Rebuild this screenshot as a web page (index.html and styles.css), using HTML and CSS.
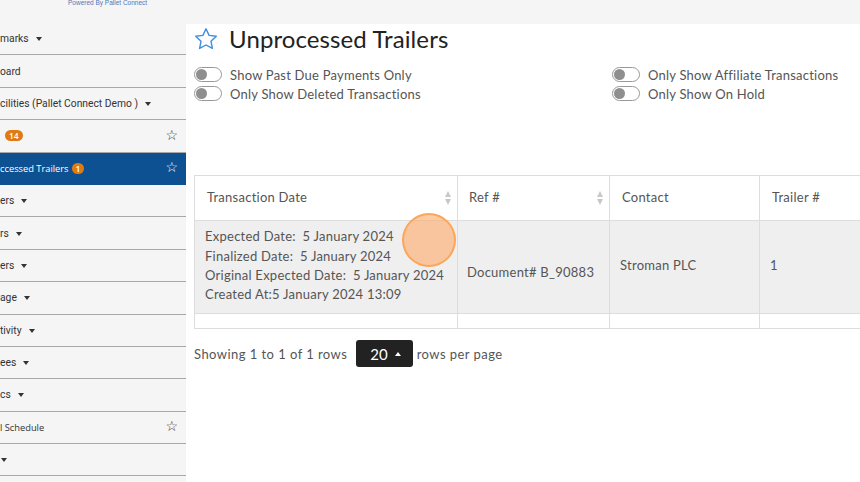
FILE: index.html
```html
<!DOCTYPE html>
<html>
<head>
<meta charset="utf-8">
<link rel="stylesheet" href="styles.css">
</head>
<body>
<div class="topbar"><span class="powered">Powered By Pallet Connect</span></div>
<div class="layout">
  <nav class="sidebar">
    <div class="item"><span class="lbl">marks</span><span class="caret"></span></div>
    <div class="item"><span class="lbl">oard</span></div>
    <div class="item"><span class="lbl">cilities (Pallet Connect Demo )</span><span class="caret"></span></div>
    <div class="item"><span class="lbl pad"></span><span class="badge">14</span><span class="star">&#9734;</span></div>
    <div class="item active"><span class="lbl os">ccessed Trailers</span><span class="badge">1</span><span class="star">&#9734;</span></div>
    <div class="item"><span class="lbl">ers</span><span class="caret"></span></div>
    <div class="item"><span class="lbl">rs</span><span class="caret"></span></div>
    <div class="item"><span class="lbl">ers</span><span class="caret"></span></div>
    <div class="item"><span class="lbl">age</span><span class="caret"></span></div>
    <div class="item"><span class="lbl">tivity</span><span class="caret"></span></div>
    <div class="item"><span class="lbl">ees</span><span class="caret"></span></div>
    <div class="item"><span class="lbl">cs</span><span class="caret"></span></div>
    <div class="item"><span class="lbl os">l Schedule</span><span class="star">&#9734;</span></div>
    <div class="item"><span class="caret first"></span></div>
  </nav>
  <main class="main">
    <h1 class="title">
      <svg class="title-star" viewBox="0 0 24 24" width="24" height="24"><path d="M12 1.8l3.1 6.6 7.2.9-5.3 5 1.4 7.1L12 18l-6.4 3.4 1.4-7.1-5.3-5 7.2-.9z" fill="none" stroke="#3d8ee0" stroke-width="1.4" stroke-linejoin="round"/></svg>
      <span>Unprocessed Trailers</span>
    </h1>
    <div class="filters">
      <div class="fcol">
        <label class="toggle"><span class="sw"><span class="knob"></span></span>Show Past Due Payments Only</label>
        <label class="toggle"><span class="sw"><span class="knob"></span></span>Only Show Deleted Transactions</label>
      </div>
      <div class="fcol">
        <label class="toggle"><span class="sw"><span class="knob"></span></span>Only Show Affiliate Transactions</label>
        <label class="toggle"><span class="sw"><span class="knob"></span></span>Only Show On Hold</label>
      </div>
    </div>
    <div class="table-wrap">
      <table class="grid">
        <thead>
          <tr>
            <th class="c1">Transaction Date<span class="sort"></span></th>
            <th class="c2">Ref #<span class="sort"></span></th>
            <th class="c3">Contact</th>
            <th class="c4">Trailer #</th>
          </tr>
        </thead>
        <tbody>
          <tr class="row">
            <td class="dates">
              <div>Expected Date:&ensp;5 January 2024</div>
              <div>Finalized Date:&ensp;5 January 2024</div>
              <div>Original Expected Date:&ensp;5 January 2024</div>
              <div>Created At:5 January 2024 13:09</div>
            </td>
            <td class="ref">Document# B_90883</td>
            <td class="contact">Stroman PLC</td>
            <td class="contact">1</td>
          </tr>
          <tr class="empty"><td></td><td></td><td></td><td></td></tr>
        </tbody>
      </table>
      <span class="click-dot"></span>
    </div>
    <div class="pager">
      <span>Showing 1 to 1 of 1 rows</span>
      <span class="size">20 <span class="up"></span></span>
      <span>rows per page</span>
    </div>
  </main>
</div>
</body>
</html>
```
FILE: styles.css
```css
* { box-sizing: border-box; }
html, body { margin: 0; padding: 0; }
body {
  width: 860px;
  height: 482px;
  overflow: hidden;
  background: #fff;
  font-family: "Lato", "Open Sans", sans-serif;
}
.topbar {
  height: 24px;
  background: #f5f5f5;
  position: relative;
}
.powered {
  position: absolute;
  left: 68px;
  top: 0;
  line-height: 6px;
  font-family: "Liberation Sans", sans-serif;
  font-size: 6.5px;
  color: #4f77b8;
}
.layout {
  display: flex;
  height: 458px;
}
.sidebar {
  width: 186px;
  flex: none;
  background: #f5f5f5;
  display: flex;
  flex-direction: column;
  margin-top: -1px;
  overflow: hidden;
}
.item {
  height: 32.4px;
  flex: none;
  border-bottom: 1px solid #a8a8a8;
  display: flex;
  align-items: center;
  font-family: "Roboto", sans-serif;
  font-size: 10.3px;
  color: #333;
  position: relative;
}
.item .lbl { white-space: nowrap; }
.item .lbl.os { font-family: "Open Sans", sans-serif; font-size: 9.3px; }
.item .lbl.pad { width: 2px; }
.caret {
  display: inline-block;
  width: 0; height: 0;
  border-left: 3px solid transparent;
  border-right: 3px solid transparent;
  border-top: 4px solid #333;
  margin-left: 7px;
  margin-top: 1px;
}
.caret.first { margin-left: 1px; }
.badge {
  display: inline-block;
  background: #e07b14;
  color: #fff;
  font-family: "Open Sans", sans-serif;
  font-size: 8.5px;
  font-weight: 600;
  line-height: 11px;
  padding: 0 4px;
  border-radius: 6px;
  margin-left: 3px;
}
.star {
  position: absolute;
  right: 8px;
  top: 50%;
  transform: translateY(-55%);
  font-size: 14px;
  color: #333;
  font-family: "DejaVu Sans", sans-serif;
}
.item.active {
  background: #0d5193;
  color: #fff;
  border-bottom-color: #0d5193;
}
.item.active .star { color: #fff; }
.main {
  flex: 1;
  padding-left: 8px;
  min-width: 0;
}
.title {
  display: flex;
  align-items: center;
  margin: 0;
  height: 33px;
  padding-top: 0;
  margin-top: -2px;
  font-weight: 400;
  font-size: 24px;
  color: #222;
  letter-spacing: 0.1px;
}
.title-star { margin-left: 0px; margin-right: 11px; }
.filters {
  display: grid;
  grid-template-columns: 418px 1fr;
  margin-top: 10px;
}
.fcol { display: flex; flex-direction: column; gap: 0; }
.toggle {
  display: flex;
  align-items: center;
  height: 19px;
  font-size: 13px;
  letter-spacing: 0.22px;
  color: #555;
}
.sw {
  width: 28px;
  height: 15px;
  border: 1px solid #999;
  border-radius: 8px;
  background: #fff;
  margin-right: 8px;
  position: relative;
  flex: none;
}
.knob {
  position: absolute;
  left: 1px; top: 1px;
  width: 11px; height: 11px;
  border-radius: 50%;
  background: #8f8f8f;
}
.table-wrap {
  position: relative;
  margin-top: 72px;
}
.grid {
  border-collapse: collapse;
  width: 720px;
  font-size: 13px;
  letter-spacing: 0.25px;
  color: #555;
}
.grid th, .grid td {
  border: 1px solid #ddd;
  text-align: left;
  font-weight: 400;
}
.grid th {
  height: 45px;
  padding: 0 12px 2px;
  position: relative;
  background: #fff;
}
.c1 { width: 263px; }
.c2 { width: 152px; padding-left: 11px !important; }
.c3 { width: 150px; }
.sort {
  position: absolute;
  right: 5px;
  top: 15px;
  width: 7px;
  height: 14px;
}
.sort::before, .sort::after {
  content: "";
  position: absolute;
  left: 0;
  border-left: 3.5px solid transparent;
  border-right: 3.5px solid transparent;
}
.sort::before { top: 0; border-bottom: 6px solid #c8c8c8; }
.sort::after { bottom: 0; border-top: 6px solid #c8c8c8; }
.row td { background: #efefef; height: 93px; }
.dates { padding: 0 10px 2px; line-height: 19.3px; }
.ref { padding: 9px 8px 0 9px; }
.contact { padding: 0 10px 4px 10px; }
.empty td { height: 15px; background: #fff; }
.click-dot {
  position: absolute;
  left: 208px;
  top: 38px;
  width: 54px;
  height: 54px;
  border-radius: 50%;
  background: rgba(255, 171, 110, 0.62);
  border: 2px solid rgba(252, 160, 76, 0.85);
}
.pager {
  display: flex;
  align-items: center;
  margin-top: 11px;
  font-size: 13px;
  letter-spacing: 0.45px;
  color: #555;
}
.size {
  display: inline-flex;
  align-items: center;
  height: 27px;
  padding: 0 12px 0 14px;
  margin: 0 4px 0 9px;
  background: #222;
  color: #fff;
  border-radius: 3px;
  font-size: 15px;
  letter-spacing: 0;
}
.up {
  display: inline-block;
  margin-left: 7px;
  border-left: 3px solid transparent;
  border-right: 3px solid transparent;
  border-bottom: 4px solid #fff;
}
```
